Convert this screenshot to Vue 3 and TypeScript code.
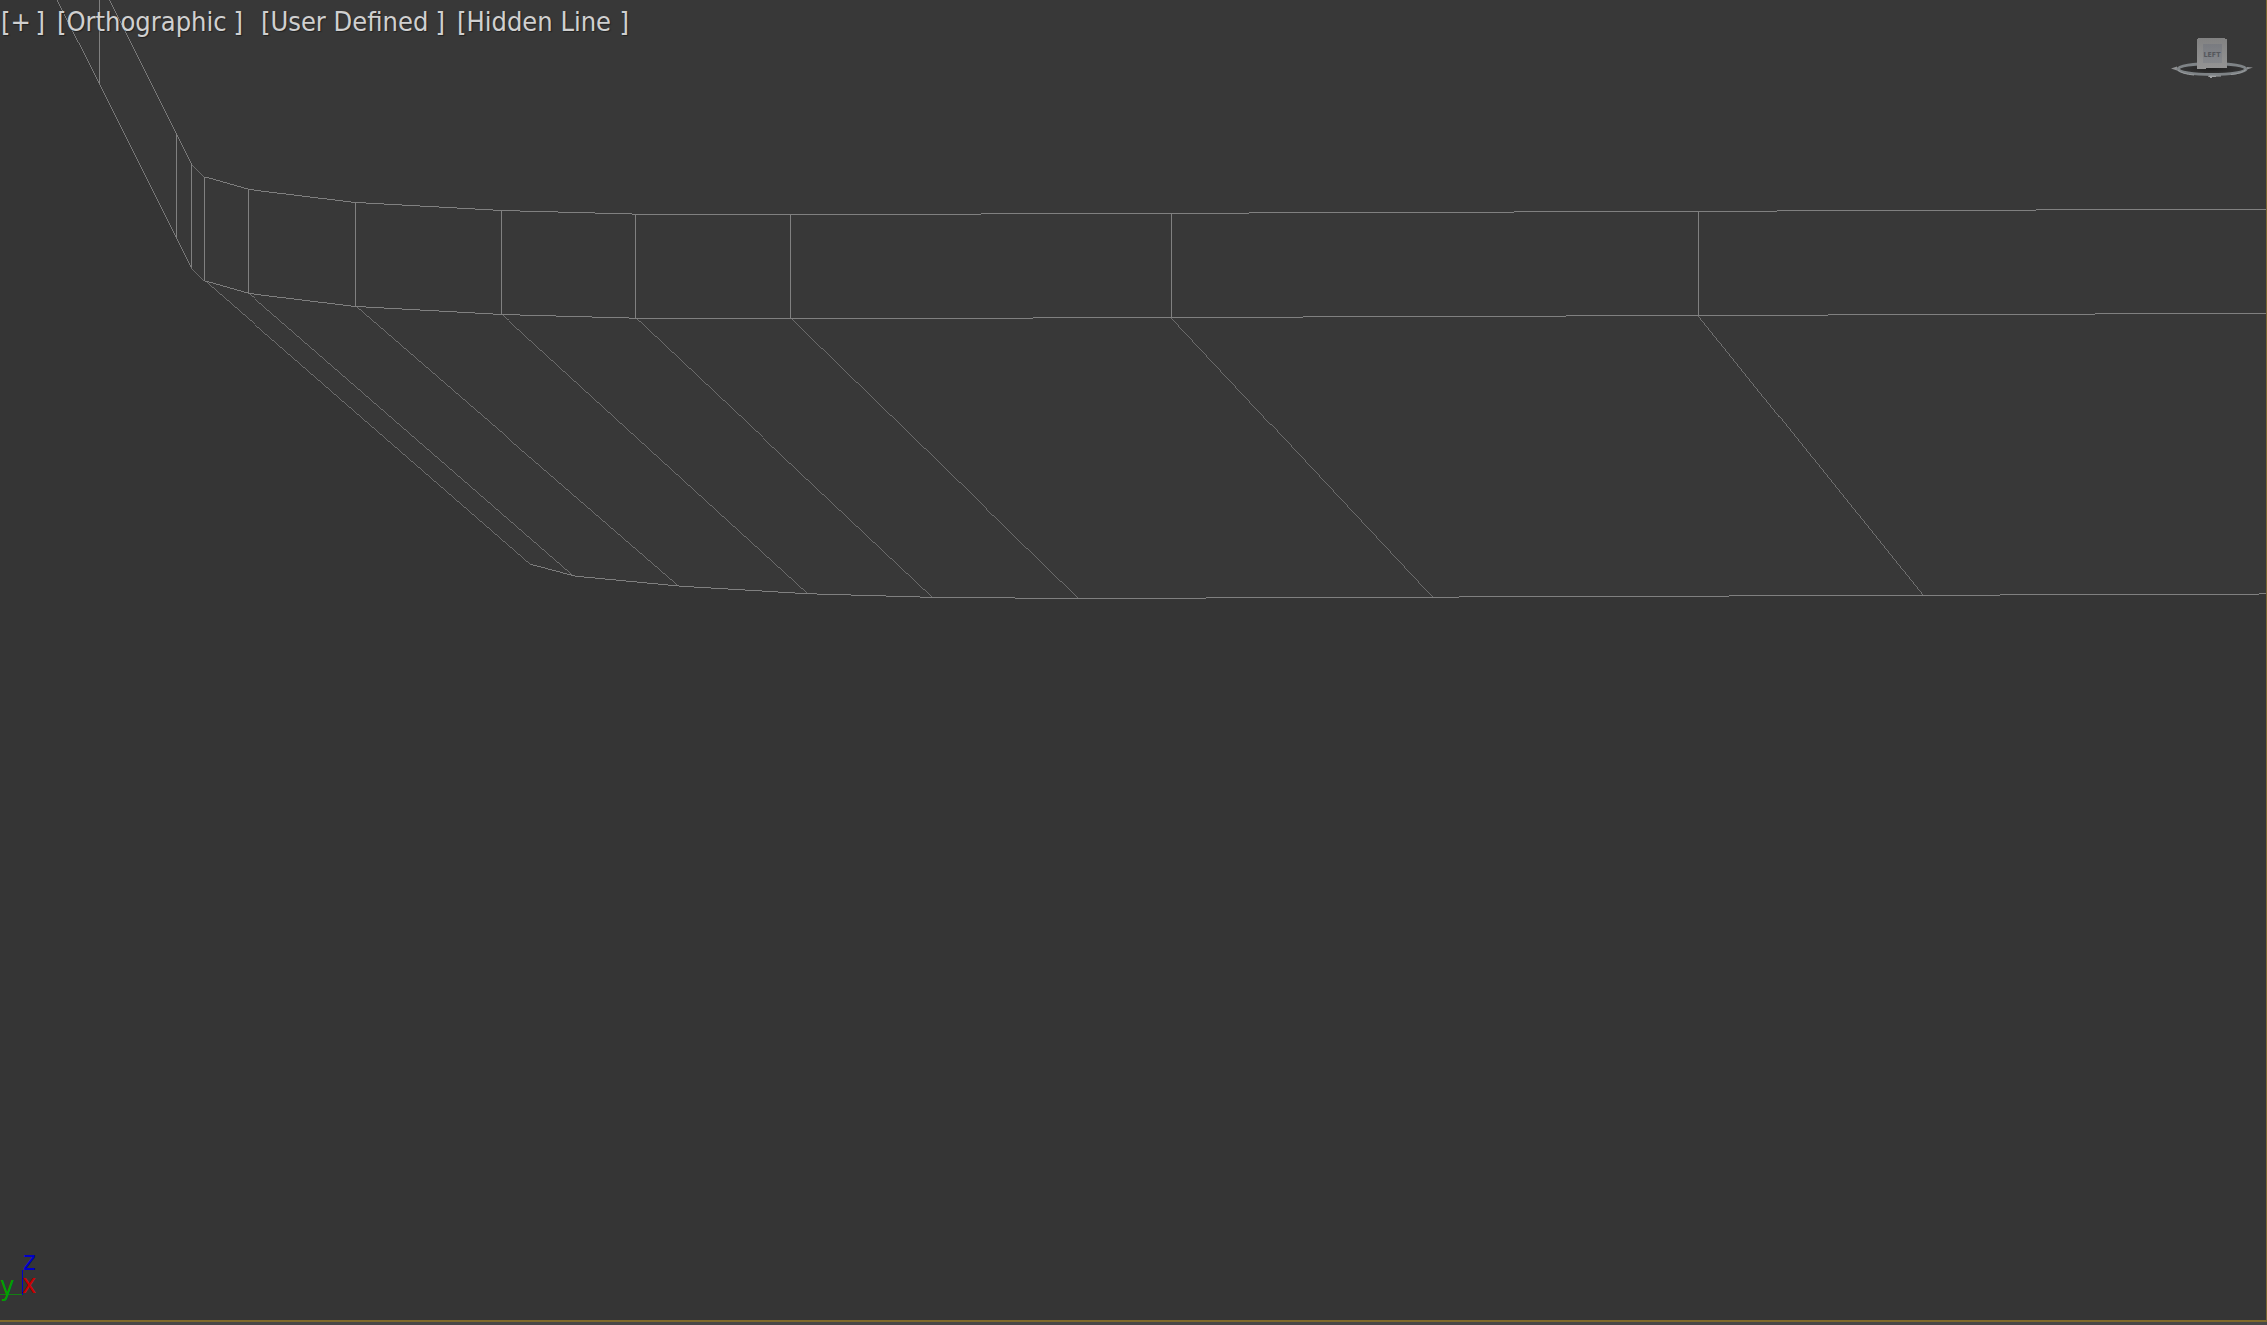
<script setup lang="ts">
interface Menu {
  label: string
  width: number
}

type Point = [number, number]
type Segment = [number, number, number, number]

const menuGroups: Menu[][] = [
  [
    { label: '[+', width: 44 },
    { label: '[Orthographic', width: 186 },
  ],
  [
    { label: '[User Defined', width: 184 },
    { label: '[Hidden Line', width: 172 },
  ],
]

const upperEdge: Point[] = [
  [109.5, 0], [176.5, 133.5], [191.5, 163.5], [204.5, 177], [248.5, 189.5],
  [355.5, 202.5], [501.5, 210.5], [635.5, 214.1], [790.5, 214.7],
  [1171.5, 213.3], [1698.5, 211.3], [3400, 204.8],
]
const middleEdge: Point[] = [
  [57, 0], [99.5, 84], [176.5, 238], [191.5, 267.5], [204.5, 281],
  [248.5, 293.5], [355.5, 306.5], [501.5, 314.5], [635.5, 318.2],
  [790.5, 318.9], [1171.5, 317.5], [1698.5, 315.5], [3400, 309.1],
]
const lowerEdge: Point[] = [
  [204.5, 281], [530.5, 564.5], [574.5, 576.2], [679.5, 586.2],
  [808.5, 593.8], [932.5, 597.4], [1078.5, 598.5], [1432.5, 597.1],
  [1923.5, 595.3], [3400, 589.6],
]
const bodyShape = [...middleEdge.slice(0, 4), ...lowerEdge, [3400, 0]].join(' ')

const ribs: Segment[] = [
  [99.5, 0, 99.5, 84],
  [176.5, 133, 176.5, 238],
  [191.5, 163, 191.5, 267],
  [204.5, 177, 204.5, 281],
  [248.5, 189, 248.5, 293],
  [355.5, 202, 355.5, 306],
  [501.5, 210, 501.5, 314],
  [635.5, 214, 635.5, 318],
  [790.5, 214, 790.5, 319],
  [1171.5, 213, 1171.5, 317],
  [1698.5, 211, 1698.5, 315],
  [248.5, 293.5, 573.5, 576],
  [355.5, 306.5, 678.5, 586],
  [501.5, 314.5, 807.5, 593.5],
  [635.5, 318.2, 932.5, 597.5],
  [790.5, 318.9, 1078.5, 598.5],
  [1171.5, 317.5, 1432.5, 597],
  [1698.5, 315.5, 1923.5, 595.5],
]

const toSegments = (points: Point[]): Segment[] =>
  points.slice(1).map((p, i) => [...points[i], ...p] as Segment)

// Narrow slanted lines so that each covers one pixel per row or column.
const lineWidth = ([x1, y1, x2, y2]: Segment): number => {
  const dx = Math.abs(x2 - x1)
  const dy = Math.abs(y2 - y1)
  return Math.max(dx, dy) / Math.hypot(dx, dy)
}

const wires: Segment[] = [
  ...toSegments(upperEdge),
  ...toSegments(middleEdge),
  ...toSegments(lowerEdge),
  ...ribs,
]
</script>

<template>
  <div class="app">
    <main class="viewport">
      <svg class="mesh" aria-hidden="true">
        <polygon class="body" :points="bodyShape" />
        <g class="wire">
          <line
            v-for="(s, i) in wires"
            :key="i"
            :x1="s[0]"
            :y1="s[1]"
            :x2="s[2]"
            :y2="s[3]"
            :stroke-width="lineWidth(s)"
          />
        </g>
      </svg>

      <header class="top">
        <nav class="menus">
          <div v-for="(group, g) in menuGroups" :key="g" class="group">
            <button
              v-for="m in group"
              :key="m.label"
              type="button"
              class="menu"
              :style="{ width: m.width + 'px' }"
            >
              <span>{{ m.label }}</span><span>]</span>
            </button>
          </div>
        </nav>
        <svg class="cube" width="84" height="46" viewBox="0 0 84 46">
          <defs>
            <linearGradient id="face" x1="0" y1="0" x2="0" y2="1">
              <stop offset="0" stop-color="#828282" />
              <stop offset="1" stop-color="#949494" />
            </linearGradient>
            <linearGradient id="panel" x1="0" y1="0" x2="0" y2="1">
              <stop offset="0" stop-color="#797b80" />
              <stop offset="1" stop-color="#86888c" />
            </linearGradient>
            <radialGradient id="shade">
              <stop offset="0" stop-color="#202020" />
              <stop offset="1" stop-color="#363636" />
            </radialGradient>
          </defs>
          <path d="M1 31.500 L7 29.500 V33.500 Z M83 30.500 L77 30 V32.500 Z" fill="#8f9092" />
          <ellipse cx="42" cy="32" rx="34" ry="5.500" fill="url(#shade)" stroke="#7e8386" stroke-width="3" />
          <path d="M8 33 Q12 37 24 38 M61 37.500 Q72 36.500 76 32.500" fill="none" stroke="#999c9e" stroke-width="1" />
          <path d="M39 38.500 H51 V39.500 H46 V40 H42 V41 H40 V40 H38 Z" fill="#a0a2a3" />
          <path d="M27 2 H28 V1 H55 V2 H57 V31 H36 V32 H27 Z" fill="url(#face)" />
          <rect x="33" y="7" width="19" height="19" fill="url(#panel)" />
          <text x="42" y="20" text-anchor="middle" class="face-label">LEFT</text>
        </svg>
      </header>

      <svg class="axes" width="44" height="76">
        <path d="M0 50.500 H22" stroke="#138013" />
        <path d="M22.500 26 V51" stroke="#0000c8" />
        <text x="23" y="26" fill="#0000c8">z</text>
        <text x="22" y="49" fill="#c80000">x</text>
        <text x="0" y="51" fill="#00a000">y</text>
      </svg>
    </main>
    <footer class="strip"></footer>
  </div>
</template>

<style>
body {
  margin: 0;
  background: #353535;
}
</style>

<style scoped>
.app {
  display: flex;
  flex-direction: column;
  min-height: 100vh;
  font-family: 'DejaVu Sans Condensed', 'DejaVu Sans', sans-serif;
  font-stretch: condensed;
}

.viewport {
  position: relative;
  flex: 1;
  display: flex;
  flex-direction: column;
  justify-content: space-between;
  overflow: hidden;
  background: #353535;
  border-right: 1px solid #7a6530;
  border-bottom: 2px solid #806a2c;
}

.mesh {
  position: absolute;
  inset: 0;
  width: 100%;
  height: 100%;
}

.body {
  fill: #383838;
}

.wire {
  stroke: #808080;
  shape-rendering: crispEdges;
}

.top {
  position: relative;
  display: flex;
  justify-content: space-between;
  align-items: flex-start;
}

.menus {
  display: flex;
  gap: 18px;
  padding: 6px 0 0 1px;
}

.group {
  display: flex;
  gap: 12px;
}

.menu {
  display: flex;
  justify-content: space-between;
  padding: 0;
  border: 0;
  background: none;
  color: #d0d0d0;
  font: inherit;
  font-size: 27px;
  line-height: 32px;
  white-space: nowrap;
  text-shadow: 1px 1px 1px #222;
}

.cube {
  margin: 37px 12px 0 0;
}

.face-label {
  font-size: 7px;
  font-weight: bold;
  fill: #55575c;
}

.axes {
  position: relative;
  display: block;
  overflow: visible;
  font-size: 27px;
}

.strip {
  height: 3px;
  background: #484848;
}
</style>
